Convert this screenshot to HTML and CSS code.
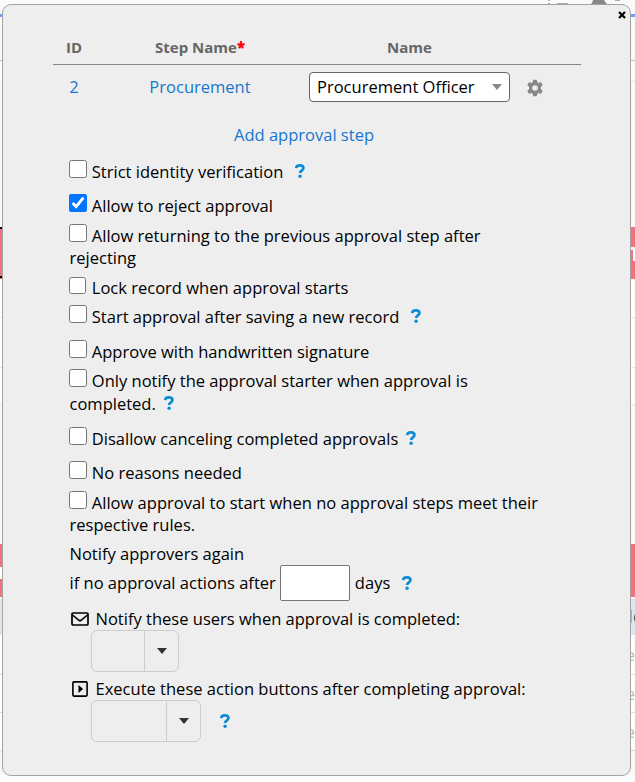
FILE: index.html
```html
<!DOCTYPE html>
<html lang="en">
<head>
<meta charset="utf-8">
<title>Approval steps</title>
<link rel="stylesheet" href="styles.css">
</head>
<body>
<div class="backdrop" aria-hidden="true">
  <div class="strip toolbar"><svg class="bell" width="90" height="6" viewBox="0 0 90 6"><path d="M4 0h2v1H4zM4 3h2v2H4zM13 3h11v2H13zM71 0h5v1h-5z" fill="#aaa"/><path d="M49 0q0 2-2 4h16q-2-2-3-4z" fill="#888"/></svg></div>
  <div class="strip blue"></div>
  <div class="strip head"></div>
  <div class="strip sub"></div>
  <div class="strip blank"></div>
  <div class="strip pink focus"><svg class="mark-right" width="4" height="14"><path d="M0 0h4v14H2V3H0z" fill="#fff"/></svg></div>
  <div class="strip mid"></div>
  <div class="strip mid second"></div>
  <div class="strip mid third"></div>
  <div class="strip mid fourth"></div>
  <div class="strip pink lower"><span class="mark-left"></span></div>
  <div class="strip bluish"><svg width="4" height="16"><path d="M0 1h1v13H0z" fill="#aab0b8"/><path d="M4 5Q2 9 4 13z" fill="#444"/></svg></div>
  <div class="strip item first">e</div>
  <div class="strip item">e</div>
  <div class="strip item">e</div>
  <div class="strip foot"></div>
</div>

<main class="dialog">
  <button class="close" aria-label="Close"><svg width="8" height="8" viewBox="0 0 8 8"><path d="M1 1l6 6M7 1L1 7" stroke="#000" stroke-width="2.2"/></svg></button>

  <section class="steps">
    <div class="grid header"><span>ID</span><span>Step Name<b class="req">*</b></span><span>Name</span></div>
    <div class="grid body">
      <a>2</a><a>Procurement</a>
      <div class="role">
        <div class="select"><span>Procurement Officer</span><i class="caret"></i></div>
        <svg class="gear" width="18" height="18" viewBox="0 0 18 18"><path fill="#888" fill-rule="evenodd" d="M7.200 .8h3.600l.4 2.300 1.500.8 2.200-.8 1.800 3.100-1.800 1.500v2.600l1.800 1.500-1.800 3.100-2.200-.8-1.500.8-.4 2.300H7.200l-.4-2.300-1.500-.8-2.200.8-1.800-3.100 1.800-1.500V7.700L1.300 6.200l1.800-3.100 2.200.8 1.500-.8zM9 6.200a2.800 2.800 0 1 0 0 5.600 2.800 2.800 0 0 0 0-5.600z"/></svg>
      </div>
    </div>
    <a class="add">Add approval step</a>
  </section>

  <section class="options">
    <label class="row r34"><input type="checkbox"> Strict identity verification<svg class="help gap11"><use href="#q"/></svg></label>
    <label class="row r30"><input type="checkbox" checked> Allow to reject approval</label>
    <label class="row r52"><input type="checkbox"> Allow returning to the previous approval step after<br>rejecting</label>
    <label class="row r29"><input type="checkbox" class="small"> Lock record when approval starts</label>
    <label class="row r35"><input type="checkbox"> Start approval after saving a new record<svg class="help gap11"><use href="#q"/></svg></label>
    <label class="row r29"><input type="checkbox"> Approve with handwritten signature</label>
    <label class="row r58"><input type="checkbox"> Only notify the approval starter when approval is<br><span class="second-line">completed.<svg class="help"><use href="#q"/></svg></span></label>
    <label class="row r34"><input type="checkbox"> Disallow canceling completed approvals<svg class="help"><use href="#q"/></svg></label>
    <label class="row r30"><input type="checkbox"> No reasons needed</label>
    <label class="row r51"><input type="checkbox"> Allow approval to start when no approval steps meet their<br>respective rules.</label>
    <div class="row again">Notify approvers again</div>
    <div class="days"><span>if no approval actions after</span><input type="text" aria-label="Days"><span>days</span><svg class="help gap11"><use href="#q"/></svg></div>
    <div class="line"><svg class="icon" width="18" height="14" viewBox="0 0 18 14"><rect x="1" y="1" width="16" height="12" rx="1" fill="none" stroke="#000" stroke-width="1.7"/><path d="M1.500 3L8 8.300q1 .7 2 0L16.500 3" fill="none" stroke="#000" stroke-width="1.600"/></svg><span>Notify these users when approval is completed:</span></div>
    <div class="pick"><div class="combo users"><span></span><i class="arrow"></i></div></div>
    <div class="line"><svg class="icon" width="18" height="16" viewBox="0 0 18 16"><rect x="1.900" y=".9" width="14.200" height="14.200" rx="1" fill="none" stroke="#000" stroke-width="1.600"/><path d="M7.500 4l4.500 4-4.500 4z"/></svg><span>Execute these action buttons after completing approval:</span></div>
    <div class="pick"><div class="combo actions"><span></span><i class="arrow"></i></div><svg class="help gap19"><use href="#q"/></svg></div>
  </section>
</main>

<svg class="defs" width="0" height="0"><symbol id="q" viewBox="0 0 10 14"><path d="M1.200 4.100Q1.400 1.400 4.900 1.400T8.500 4.100C8.500 6.400 5.100 6.400 5.100 9.100" fill="none" stroke="#0b8bd3" stroke-width="2.600"/><circle cx="5.100" cy="12.200" r="1.700" fill="#0b8bd3"/></symbol></svg>
</body>
</html>
```

FILE: styles.css
```css
* { box-sizing: border-box; }
body { margin: 0; width: 635px; height: 782px; overflow: hidden; position: relative; background: #fff; font: 400 16.520px/22px "Open Sans", "Liberation Sans", sans-serif; color: #000; }

.backdrop { display: flex; flex-direction: column; height: 782px; }
.strip { flex: none; position: relative; display: flex; justify-content: flex-end; align-items: center; }
.toolbar { height: 14px; background: #fafafa; align-items: flex-start; }
.bell { margin-right: 1px; }
.blue { height: 3px; background: #6d9dff; }
.head { height: 44px; background: #fafafa; border-bottom: 1px solid #bbb; }
.sub { height: 20px; background: #fcfcfc; border-bottom: 1px solid #eee; }
.blank { height: 146px; background: #fafafa; }
.pink { background: #f3717d; }
.focus { height: 52px; background: linear-gradient(to right, #000 2px, #f3717d 2px) top / 100% 2px no-repeat, linear-gradient(to right, #000 2px, #f3717d 2px) 0 49px / 100% 2px no-repeat, #f3717d; }
.mark-right { margin-top: 2px; }
.mid { height: 39px; border-bottom: 1px solid #e8e8e8; }
.second { height: 50px; }
.third { height: 37px; }
.fourth { height: 139px; border: 0; background: #fafafa; }
.lower { height: 55px; border-bottom: 2px solid #fafafa; justify-content: flex-start; }
.mark-left { width: 2px; height: 12px; background: #fff; margin-top: 5px; }
.bluish { height: 36px; background: #dfe6ef; }
.item { height: 38px; border-bottom: 1px solid #ddd; color: #bbb; font-size: 17px; }
.item.first { height: 40px; }
.foot { height: 31px; background: linear-gradient(#f7f7f7 24px, #fff 24px); }

.dialog { position: absolute; left: 2px; top: 4px; width: 629px; height: 772px; border: 1px solid #a3a3a3; border-radius: 9px; background: #eee; padding: 29px 49px 0 50px; }
.close { position: absolute; top: 6px; right: 4px; width: 8px; height: 8px; padding: 0; border: 0; background: none; display: flex; }
.grid { display: grid; grid-template-columns: 42px 210px 1fr; align-items: center; text-align: center; }
.header { height: 31px; border-bottom: 1px solid #868686; padding-bottom: 5px; font-size: 15px; font-weight: 700; color: #666; grid-template-columns: 42px 210px 209px; }
.req { color: #f00; }
.body { height: 44px; }
a { color: #1777cf; }
.role { display: flex; align-items: center; padding-left: 4px; }
.select { width: 201px; height: 30px; border: 1px solid #666; border-radius: 4px; background: #fff; display: flex; align-items: center; justify-content: space-between; padding: 0 7px; }
.caret { border: 5.500px solid transparent; border-top: 6px solid #888; border-bottom: 0; }
.gear { margin: 2px 0 0 16px; }
.add { display: block; width: 502px; text-align: center; margin-top: 15px; }

.options { padding-left: 16.500px; padding-top: 15px; white-space: nowrap; }
.row { display: block; }
.r29 { height: 29px; } .r30 { height: 30px; } .r34 { height: 34px; } .r35 { height: 35px; }
.r51 { height: 51px; } .r52 { height: 52px; } .r58 { height: 58px; }
.second-line { line-height: 24px; }
.row input { width: 18px; height: 18px; margin: -3px .500px 0 -.500px; vertical-align: baseline; }
.row .small { height: 17px; width: 17px; margin-right: 1.500px; margin-bottom: 1px; }
.help { width: 10px; height: 14px; margin-left: 8px; vertical-align: 0; flex: none; }
.gap11 { margin-left: 12px; }
.gap19 { margin-left: 19px; }
.again { height: 22px; }
.days { display: flex; align-items: center; height: 36px; }
.days input { width: 70px; height: 36px; margin: 0 5px 0 4px; border: 1px solid #767676; border-radius: 2px; background: #fff; }
.line { display: flex; align-items: center; height: 22px; margin-top: 7px; }
.icon { margin: 0 6.500px 0 1.500px; }
.pick { display: flex; align-items: center; padding-left: 21.500px; height: 41px; }
.combo { display: grid; height: 42px; border: 1px solid #ccc; border-radius: 6px; }
.combo span { border-right: 1px solid #ccc; }
.users { width: 88px; grid-template-columns: 53px 33px; }
.actions { width: 110px; grid-template-columns: 75px 33px; }
.arrow { align-self: center; justify-self: center; border: 5.500px solid transparent; border-top: 6px solid #333; border-bottom: 0; }
.defs { position: absolute; }
```
